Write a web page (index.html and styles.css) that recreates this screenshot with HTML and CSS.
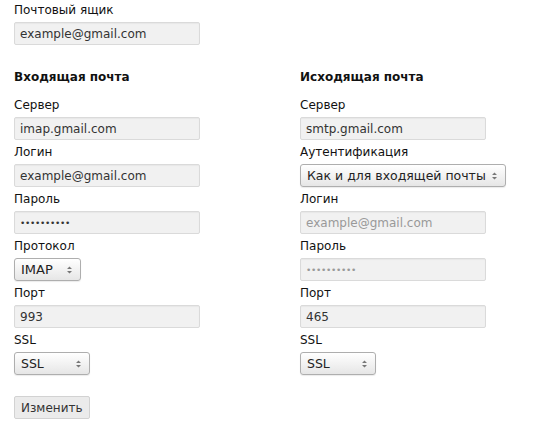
FILE: index.html
```html
<!DOCTYPE html>
<html lang="ru">
<head>
<meta charset="utf-8">
<link rel="stylesheet" href="styles.css">
</head>
<body>
<form class="form">
  <div class="field">
    <label class="label">Почтовый ящик</label>
    <input class="input" type="text" value="example@gmail.com">
  </div>
  <div class="columns">
    <div class="col">
      <h3 class="heading">Входящая почта</h3>
      <div class="field">
        <label class="label">Сервер</label>
        <input class="input" type="text" value="imap.gmail.com">
      </div>
      <div class="field">
        <label class="label">Логин</label>
        <input class="input" type="text" value="example@gmail.com">
      </div>
      <div class="field">
        <label class="label">Пароль</label>
        <input class="input pass" type="text" value="••••••••••">
      </div>
      <div class="field">
        <label class="label">Протокол</label>
        <div class="select sel-proto"><span>IMAP</span><svg class="arrows" width="7" height="10" viewBox="0 0 7 10"><path d="M1 4 L3.5 1.5 L6 4 Z M1 6 L3.5 8.5 L6 6 Z" fill="#777"/></svg></div>
      </div>
      <div class="field">
        <label class="label">Порт</label>
        <input class="input" type="text" value="993">
      </div>
      <div class="field">
        <label class="label">SSL</label>
        <div class="select sel-ssl"><span>SSL</span><svg class="arrows" width="7" height="10" viewBox="0 0 7 10"><path d="M1 4 L3.5 1.5 L6 4 Z M1 6 L3.5 8.5 L6 6 Z" fill="#777"/></svg></div>
      </div>
    </div>
    <div class="col">
      <h3 class="heading">Исходящая почта</h3>
      <div class="field">
        <label class="label">Сервер</label>
        <input class="input" type="text" value="smtp.gmail.com">
      </div>
      <div class="field">
        <label class="label">Аутентификация</label>
        <div class="select sel-auth"><span>Как и для входящей почты</span><svg class="arrows" width="7" height="10" viewBox="0 0 7 10"><path d="M1 4 L3.5 1.5 L6 4 Z M1 6 L3.5 8.5 L6 6 Z" fill="#777"/></svg></div>
      </div>
      <div class="field">
        <label class="label">Логин</label>
        <input class="input disabled" type="text" value="example@gmail.com" disabled>
      </div>
      <div class="field">
        <label class="label">Пароль</label>
        <input class="input pass disabled" type="text" value="••••••••••" disabled>
      </div>
      <div class="field">
        <label class="label">Порт</label>
        <input class="input" type="text" value="465">
      </div>
      <div class="field">
        <label class="label">SSL</label>
        <div class="select sel-ssl"><span>SSL</span><svg class="arrows" width="7" height="10" viewBox="0 0 7 10"><path d="M1 4 L3.5 1.5 L6 4 Z M1 6 L3.5 8.5 L6 6 Z" fill="#777"/></svg></div>
      </div>
    </div>
  </div>
  <div class="actions">
    <button class="button" type="button">Изменить</button>
  </div>
</form>
</body>
</html>
```
FILE: styles.css
```css
html, body {
  margin: 0;
  padding: 0;
  background: #fff;
}
body {
  font-family: "DejaVu Sans", "Open Sans", sans-serif;
  font-size: 12px;
  color: #111;
}
.form {
  padding: 1px 14px 0 14px;
}
.columns {
  display: grid;
  grid-template-columns: 286px 1fr;
  margin-top: 23px;
}
.heading {
  margin: 0 0 10px 0;
  font-size: 12px;
  font-weight: bold;
  line-height: 18px;
}
.field {
  display: flex;
  flex-direction: column;
  align-items: flex-start;
  margin-bottom: 3px;
}
.label {
  display: block;
  line-height: 18px;
  margin-bottom: 3px;
}
.input {
  box-sizing: border-box;
  width: 186px;
  height: 23px;
  margin: 0;
  padding: 0 5px;
  border: 1px solid #dadada;
  border-radius: 2px;
  background: #f1f1f1;
  box-shadow: inset 0 1px 1px rgba(0,0,0,0.04);
  font-family: inherit;
  font-size: 12px;
  color: #333;
  outline: none;
}
.input.pass {
  font-size: 9px;
  letter-spacing: -0.3px;
}
.input.disabled {
  color: #999;
}
.select {
  box-sizing: border-box;
  height: 23px;
  display: flex;
  align-items: center;
  justify-content: space-between;
  padding: 0 7px 0 6px;
  border: 1px solid #aeaeae;
  border-radius: 3px;
  background: linear-gradient(#ffffff, #e6e6e6);
  box-shadow: 0 1px 1px rgba(0,0,0,0.08);
  color: #222;
  font-size: 12.5px;
}
.sel-proto { width: 67px; }
.sel-proto span { font-size: 13px; }
.sel-ssl { width: 76px; }
.sel-auth { width: 206px; }
.arrows { flex: none; }
.actions {
  margin-top: 18px;
}
.button {
  box-sizing: border-box;
  height: 23px;
  padding: 0 6px;
  border: 1px solid #d2d2d2;
  border-radius: 2px;
  background: #ebebeb;
  font-family: inherit;
  font-size: 12px;
  color: #333;
}
```
